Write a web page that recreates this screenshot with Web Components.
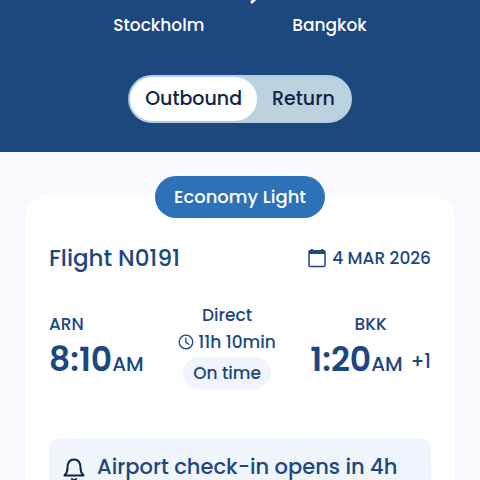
<!DOCTYPE html>
<html lang="en">
<head>
<meta charset="utf-8">
<meta name="viewport" content="width=device-width, initial-scale=1">
<title>Flight N0191</title>
<style>
html { --navy: #1c477f; --ink: #0d2547; --mist: #eff5fa; --blue: #2d72b9; }
body { margin: 0; background: #faf9ff; color: var(--navy); font: 500 17px/24px Poppins, Inter, "Open Sans", sans-serif; overflow: hidden; }
</style>
</head>
<body>
<trip-header>
  <span slot="from">Stockholm</span>
  <span slot="to">Bangkok</span>
  <direction-toggle></direction-toggle>
</trip-header>
<flight-card>
  <span slot="fare">Economy Light</span>
  <span slot="flight">Flight N0191</span>
  <span slot="date">4 MAR 2026</span>
  <flight-time slot="depart"><span slot="code">ARN</span><span slot="time">8:10</span><span slot="half">AM</span></flight-time>
  <flight-status slot="status"><span slot="stops">Direct</span><span slot="duration">11h 10min</span><span slot="state">On time</span></flight-status>
  <flight-time slot="arrive" class="arrive"><span slot="code">BKK</span><span slot="time">1:20</span><span slot="half">AM</span><span slot="days">+1</span></flight-time>
  <flight-notice>Airport check-in opens in 4h</flight-notice>
</flight-card>
<script>
function define(name, html, setup) {
  const template = document.createElement('template');
  template.innerHTML = html;
  customElements.define(name, class extends HTMLElement {
    constructor() {
      super();
      const root = this.attachShadow({ mode: 'open' });
      root.append(template.content.cloneNode(true));
      if (setup) setup(root);
    }
  });
}

define('direction-toggle', `
<style>
:host { display: block; }
div { display: flex; border: 2px solid #a9c7e0; border-color: #b4cddf #bdd2df #b4cddf #a9c7e0; border-radius: 24px; background: #bdd2df; }
button { flex: 1 1 auto; margin: 0; border: 0; border-radius: 22px; padding: 8px 15px; background: none; color: var(--ink); font: inherit; font-size: 19px; line-height: 28px; cursor: pointer; }
button[aria-pressed="true"] { background: #fff; }
</style>
<div role="group" aria-label="Direction"><button type="button" aria-pressed="true">Outbound</button><button type="button" aria-pressed="false">Return</button></div>`,
root => {
  const buttons = root.querySelectorAll('button');
  buttons.forEach(b => b.addEventListener('click', () =>
    buttons.forEach(o => o.setAttribute('aria-pressed', String(o === b)))));
});

define('trip-header', `
<style>
:host { display: flex; flex-direction: column; align-items: center; gap: 38px; padding-bottom: 29px; background: var(--navy); color: #fff; }
.route { display: grid; grid-template-columns: auto 88px auto; justify-content: center; }
svg { grid-column: 2; display: block; justify-self: center; height: 13px; width: 30px; }
.from { grid-area: 2 / 1; } .to { grid-area: 2 / 3; }
</style>
<div class="route">
  <svg viewBox="0 0 30 13" fill="none" stroke="#fff" stroke-width="3" stroke-linecap="round" aria-hidden="true"><path d="M25-4 19 2"/></svg>
  <div class="from"><slot name="from"></slot></div><div class="to"><slot name="to"></slot></div>
</div>
<slot></slot>`);

define('flight-time', `
<style>
:host { display: flex; flex-direction: column; padding-top: 8px; }
:host(.arrive) { align-items: center; }
.row { display: flex; align-items: baseline; line-height: 48px; }
.time { font-size: 33px; font-weight: 600; }
.half { font-size: 20px; }
.days { align-self: center; font-size: 19px; padding-left: 8px; }
.days:not(.used) { display: none; }
</style>
<slot name="code"></slot>
<div class="row"><span class="time"><slot name="time"></slot></span><span class="half"><slot name="half"></slot></span><span class="days"><slot name="days"></slot></span></div>`,
root => {
  const days = root.querySelector('.days');
  days.firstChild.addEventListener('slotchange', e => days.classList.toggle('used', e.target.assignedNodes().length > 0));
});

define('flight-status', `
<style>
:host { display: flex; flex-direction: column; align-items: center; gap: 3px; }
.duration { display: flex; align-items: center; gap: 4px; }
.state { border-radius: 16px; padding: 4px 10px; background: var(--mist); }
svg { display: block; width: 16px; height: 16px; }
</style>
<slot name="stops"></slot>
<div class="duration"><svg viewBox="0 0 16 16" fill="none" stroke="currentColor" stroke-width="1.3" stroke-linecap="round" aria-hidden="true"><circle cx="8" cy="8" r="6.8"/><path d="M7.800 4v4.400l3 1.900"/></svg><slot name="duration"></slot></div>
<div class="state"><slot name="state"></slot></div>`);

define('flight-notice', `
<style>
:host { display: flex; align-items: center; gap: 10px; margin-top: 50px; padding: 12px 12px 24px; border-radius: 8px; background: var(--mist); font-size: 21px; line-height: 32px; }
svg { display: block; flex: none; width: 26px; height: 32px; color: var(--ink); }
</style>
<svg viewBox="0 0 26 32" fill="none" stroke="currentColor" stroke-width="2" stroke-linejoin="round" stroke-linecap="round" aria-hidden="true"><path d="M3.500 24.500h19c-2-2-3-4-3-7.500 0-5-2-8.500-6.500-8.500S6.500 12 6.500 17c0 3.500-1 5.500-3 7.500ZM11 28c.7 1.500 3.300 1.500 4 0"/></svg>
<slot></slot>`);

define('flight-card', `
<style>
:host { display: block; position: relative; margin: 45px 25px 24px; padding: 44px 24px 24px; border-radius: 20px; background: #fff; }
.fare { position: absolute; top: -21px; left: 50%; transform: translateX(-50%); padding: 9px 19px; border-radius: 21px; background: var(--blue); color: #fff; font-size: 18px; white-space: nowrap; }
.head, .legs { display: flex; justify-content: space-between; }
.head { align-items: center; }
h1 { margin: 0; font-size: 23px; line-height: 34px; font-weight: 500; }
.date { display: flex; align-items: center; gap: 6px; }
.date svg { display: block; width: 18px; height: 20px; }
.legs { align-items: center; margin-top: 28px; }
</style>
<div class="fare"><slot name="fare"></slot></div>
<div class="head"><h1><slot name="flight"></slot></h1><div class="date"><svg viewBox="0 0 18 20" aria-hidden="true"><path fill="none" stroke="currentColor" stroke-width="1.500" d="M2 3h14q1 0 1 1v13.500q0 1-1 1H2q-1 0-1-1V4q0-1 1-1Z"/><path fill="currentColor" d="M1 3Q1 2 2 2h1V1h2v1h8V1h2v1h1q1 0 1 1v3H1Z"/></svg><slot name="date"></slot></div></div>
<div class="legs"><slot name="depart"></slot><slot name="status"></slot><slot name="arrive"></slot></div>
<slot></slot>`);
</script>
</body>
</html>
